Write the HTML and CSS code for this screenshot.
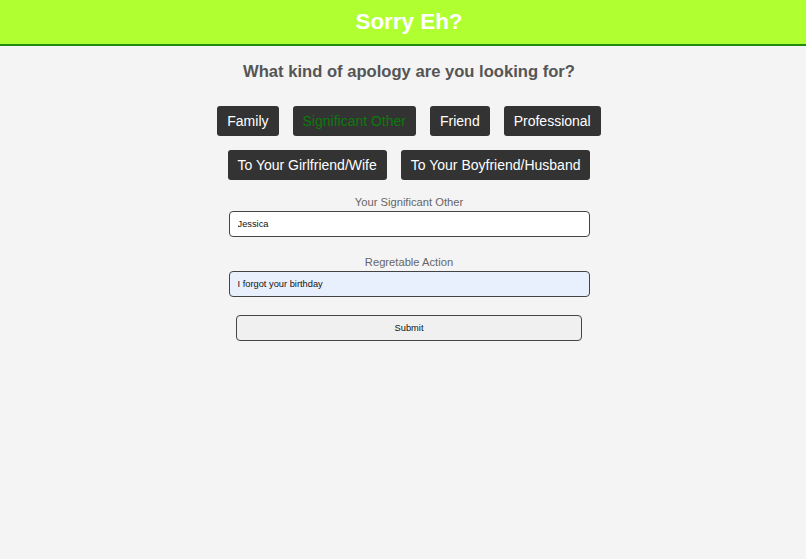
FILE: index.html
```html
<!DOCTYPE html>
<html lang="en">
<head>
<meta charset="utf-8">
<title>Sorry Eh?</title>
<link rel="stylesheet" href="styles.css">
</head>
<body>
<header class="topbar">
  <h1 class="title">Sorry Eh?</h1>
</header>
<main class="content">
  <h2 class="question">What kind of apology are you looking for?</h2>
  <div class="choices">
    <button class="choice">Family</button>
    <button class="choice active">Significant Other</button>
    <button class="choice">Friend</button>
    <button class="choice">Professional</button>
  </div>
  <div class="choices">
    <button class="choice">To Your Girlfriend/Wife</button>
    <button class="choice">To Your Boyfriend/Husband</button>
  </div>
  <form class="form">
    <label class="field">
      <span class="field-label">Your Significant Other</span>
      <input class="field-input" type="text" value="Jessica">
    </label>
    <label class="field">
      <span class="field-label">Regretable Action</span>
      <input class="field-input filled" type="text" value="I forgot your birthday">
    </label>
    <button class="submit" type="button">Submit</button>
  </form>
</main>
</body>
</html>
```
FILE: styles.css
```css
html, body {
  margin: 0;
  padding: 0;
}

body {
  background: #f4f4f4;
  font-family: "Liberation Sans", Arial, sans-serif;
  color: #333;
}

.topbar {
  height: 44px;
  padding-left: 12px;
  background: #b0ff30;
  border-bottom: 2px solid #1f8a12;
  display: flex;
  align-items: center;
  justify-content: center;
}

.title {
  margin: 0;
  font-size: 22.4px;
  font-weight: bold;
  color: #fff;
}

.content {
  display: flex;
  flex-direction: column;
  align-items: center;
  padding-top: 15px;
  padding-left: 12px;
}

.question {
  margin: 0 0 24px;
  font-size: 16.6px;
  font-weight: bold;
  color: #555;
  line-height: 21px;
}

.choices {
  display: flex;
  justify-content: center;
  gap: 14px;
  margin-bottom: 14px;
}

.choice {
  height: 30px;
  padding: 0 10px;
  background: #333;
  color: #fff;
  border: none;
  border-radius: 3px;
  font-family: "Liberation Sans", Arial, sans-serif;
  font-size: 14px;
  cursor: pointer;
}

.choice.active {
  color: #0d7a0d;
}

.form {
  display: flex;
  flex-direction: column;
  align-items: center;
  margin-top: 1px;
}

.field {
  display: flex;
  flex-direction: column;
  align-items: center;
  margin-bottom: 18px;
}

.field-label {
  font-size: 11.2px;
  color: #666;
  line-height: 14px;
  margin-bottom: 2px;
}

.field-input {
  box-sizing: border-box;
  width: 361px;
  height: 26px;
  padding: 0 8px;
  border: 1px solid #444;
  border-radius: 4px;
  background: #fff;
  font-family: "Liberation Sans", Arial, sans-serif;
  font-size: 9.3px;
  color: #111;
}

.field-input.filled {
  background: #e8f0fe;
}

.submit {
  box-sizing: border-box;
  width: 346px;
  height: 26px;
  border: 1px solid #444;
  border-radius: 4px;
  background: #f0f0f0;
  font-family: "Liberation Sans", Arial, sans-serif;
  font-size: 9.3px;
  color: #111;
}
```
